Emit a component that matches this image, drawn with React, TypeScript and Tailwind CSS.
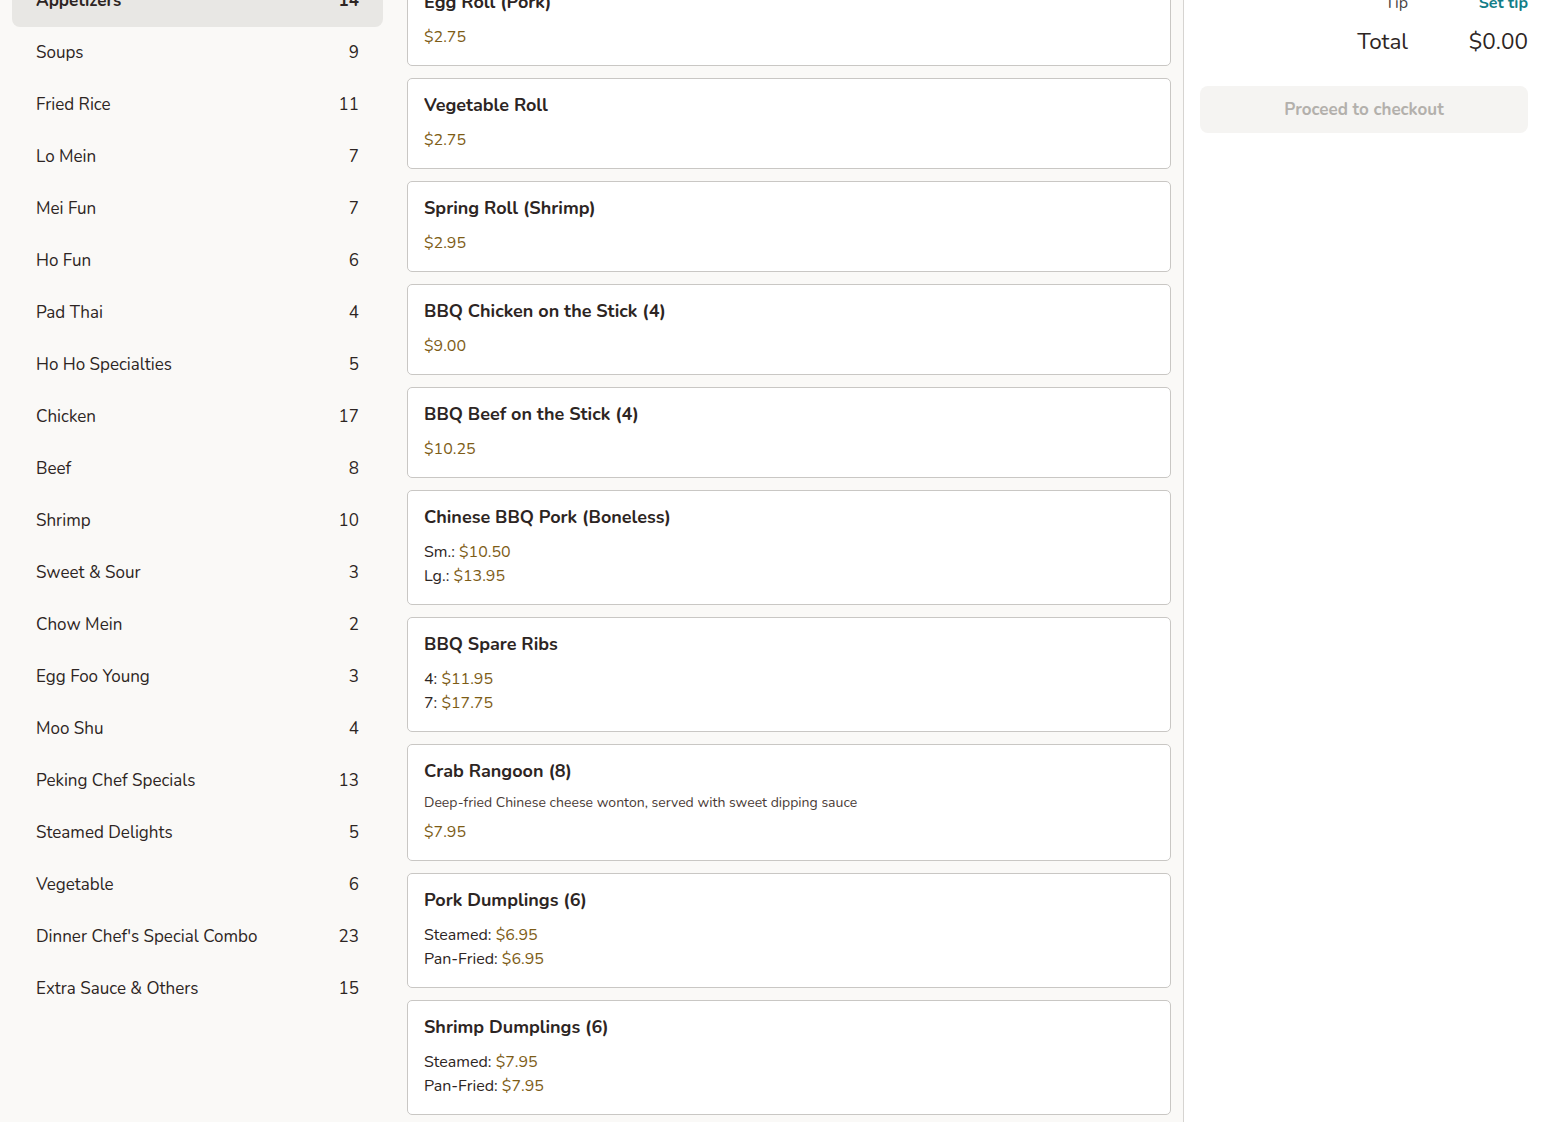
import React from "react";

const cats: [string, number][] = [
  ["Appetizers", 14],
  ["Soups", 9],
  ["Fried Rice", 11],
  ["Lo Mein", 7],
  ["Mei Fun", 7],
  ["Ho Fun", 6],
  ["Pad Thai", 4],
  ["Ho Ho Specialties", 5],
  ["Chicken", 17],
  ["Beef", 8],
  ["Shrimp", 10],
  ["Sweet & Sour", 3],
  ["Chow Mein", 2],
  ["Egg Foo Young", 3],
  ["Moo Shu", 4],
  ["Peking Chef Specials", 13],
  ["Steamed Delights", 5],
  ["Vegetable", 6],
  ["Dinner Chef's Special Combo", 23],
  ["Extra Sauce & Others", 15],
];

type Item = { name: string; desc?: string; prices: [string | null, string][] };

const items: Item[] = [
  { name: "Egg Roll (Pork)", prices: [[null, "$2.75"]] },
  { name: "Vegetable Roll", prices: [[null, "$2.75"]] },
  { name: "Spring Roll (Shrimp)", prices: [[null, "$2.95"]] },
  { name: "BBQ Chicken on the Stick (4)", prices: [[null, "$9.00"]] },
  { name: "BBQ Beef on the Stick (4)", prices: [[null, "$10.25"]] },
  { name: "Chinese BBQ Pork (Boneless)", prices: [["Sm.:", "$10.50"], ["Lg.:", "$13.95"]] },
  { name: "BBQ Spare Ribs", prices: [["4:", "$11.95"], ["7:", "$17.75"]] },
  {
    name: "Crab Rangoon (8)",
    desc: "Deep-fried Chinese cheese wonton, served with sweet dipping sauce",
    prices: [[null, "$7.95"]],
  },
  { name: "Pork Dumplings (6)", prices: [["Steamed:", "$6.95"], ["Pan-Fried:", "$6.95"]] },
  { name: "Shrimp Dumplings (6)", prices: [["Steamed:", "$7.95"], ["Pan-Fried:", "$7.95"]] },
  { name: "Vegetable Dumplings (6)", prices: [["Steamed:", "$6.95"], ["Pan-Fried:", "$6.95"]] },
];

export default function App() {
  return (
    <div
      className="flex h-[1122px] w-[1544px] overflow-hidden bg-[#faf9f7] text-[#2d2523]"
      style={{ fontFamily: "Nunito, Lato, 'Open Sans', sans-serif" }}
    >
      <aside className="w-[395px] shrink-0 px-3">
        <ul className="mt-[-25px]">
          {cats.map(([n, c], i) => (
            <li
              key={n}
              className={`flex h-[52px] items-center justify-between rounded-lg px-6 text-[17px] ${
                i === 0 ? "bg-[#e8e7e4] font-bold" : ""
              }`}
            >
              <span>{n}</span>
              <span>{c}</span>
            </li>
          ))}
        </ul>
      </aside>
      <main className="w-[788px] shrink-0 px-3">
        <div className="mt-[-25px] flex flex-col gap-3">
          {items.map((it) => (
            <div
              key={it.name}
              className="rounded-[5px] border border-[#c9c7c4] bg-white px-4 py-4"
            >
              <div className="text-[18px] font-bold leading-[21px]">{it.name}</div>
              {it.desc ? (
                <div className="mt-[11px] text-[14px] leading-[20px] text-[#4a3b36]">{it.desc}</div>
              ) : null}
              <div className={it.desc ? "mt-[7px]" : "mt-3"}>
                {it.prices.map(([l, p], i) => (
                  <div key={i} className="text-[16px] leading-[24px]">
                    {l ? <span>{l} </span> : null}
                    <span className="text-[#7d5c16]">{p}</span>
                  </div>
                ))}
              </div>
            </div>
          ))}
        </div>
      </main>
      <section className="flex-1 border-l border-[#d6d4d1] bg-white px-4">
        <div className="mt-[-10px] grid grid-cols-[1fr_120px] items-center">
          <div className="text-right text-[16px] leading-[26px] text-[#4a4442]">Tip</div>
          <div className="text-right text-[16px] font-bold leading-[26px] text-[#127d87]">Set tip</div>
          <div className="mt-[8px] text-right text-[22.5px] leading-[36px]">Total</div>
          <div className="mt-[8px] text-right text-[22.5px] leading-[36px]">$0.00</div>
        </div>
        <button className="mt-[26px] h-[47px] w-full rounded-lg bg-[#f5f4f2] text-[17px] font-bold text-[#b3b0ac]">
          Proceed to checkout
        </button>
      </section>
    </div>
  );
}
